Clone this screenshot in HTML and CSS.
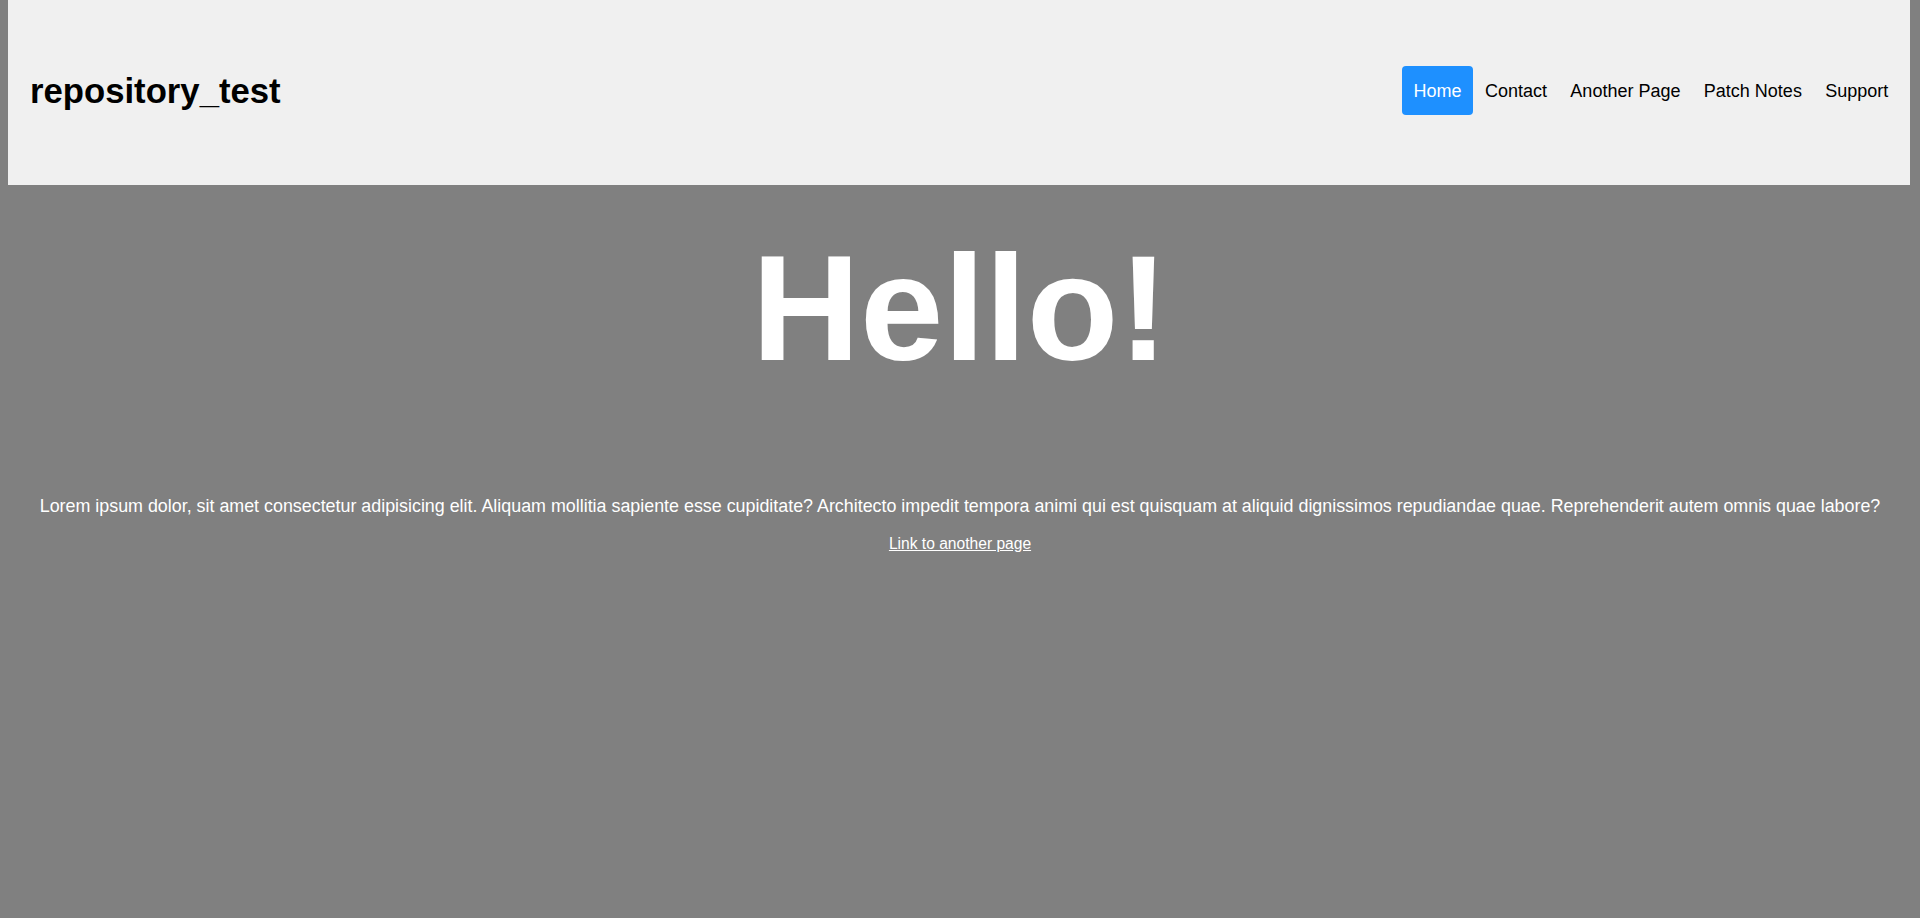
FILE: index.html
```html
<!DOCTYPE html>
<html lang="en">
<head>
<meta charset="utf-8">
<title>repository_test</title>
<link rel="stylesheet" href="styles.css">
</head>
<body>
<header class="site-header">
  <h1 class="site-title">repository_test</h1>
  <nav class="site-nav">
    <a class="nav-link active" href="#">Home</a>
    <a class="nav-link" href="#">Contact</a>
    <a class="nav-link" href="#">Another Page</a>
    <a class="nav-link" href="#">Patch Notes</a>
    <a class="nav-link" href="#">Support</a>
  </nav>
</header>
<main class="content">
  <h2 class="hello">Hello!</h2>
  <p class="intro">Lorem ipsum dolor, sit amet consectetur adipisicing elit. Aliquam mollitia sapiente esse cupiditate? Architecto impedit tempora animi qui est quisquam at aliquid dignissimos repudiandae quae. Reprehenderit autem omnis quae labore?</p>
  <p class="link-row"><a class="page-link" href="#">Link to another page</a></p>
</main>
</body>
</html>
```

FILE: styles.css
```css
html, body {
  margin: 0;
  padding: 0;
}

body {
  background: #808080;
  font-family: "Liberation Sans", Arial, sans-serif;
  color: #ffffff;
  min-height: 918px;
}

.site-header {
  margin: 0 10px 0 8px;
  height: 185px;
  box-sizing: border-box;
  padding: 0 10px 4px 22px;
  background: #f0f0f0;
  display: flex;
  align-items: center;
  justify-content: space-between;
}

.site-title {
  margin: 0;
  padding-top: 2px;
  font-size: 34.7px;
  font-weight: bold;
  color: #000000;
}

.site-nav {
  display: flex;
  align-items: center;
}

.nav-link {
  display: block;
  padding: 15px 11.7px 13px;
  font-size: 18px;
  line-height: 21px;
  color: #000000;
  text-decoration: none;
  border-radius: 4px;
}

.nav-link.active {
  background: #1e90ff;
  color: #ffffff;
}

.content {
  text-align: center;
}

.hello {
  margin: 37px 0 0;
  font-size: 150px;
  font-weight: bold;
  color: #ffffff;
}

.intro {
  margin: 101px 0 0;
  font-size: 17.87px;
}

.link-row {
  margin: 18px 0 0;
  font-size: 15.6px;
}

.page-link {
  color: #ffffff;
  text-decoration: underline;
}
```
